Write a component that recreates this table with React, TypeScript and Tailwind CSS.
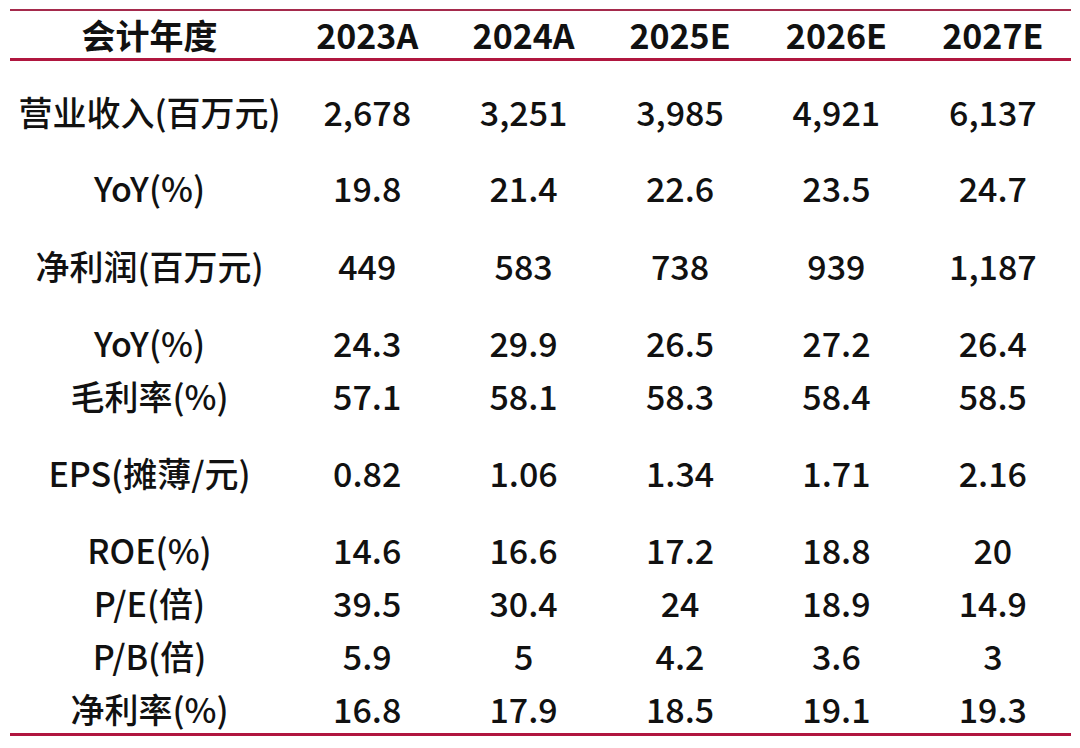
import React from "react";

const cols = ["2023A", "2024A", "2025E", "2026E", "2027E"];

const rows: { label: string; vals: string[]; h: string }[] = [
  { label: "营业收入(百万元)", vals: ["2,678", "3,251", "3,985", "4,921", "6,137"], h: "h-[102px]" },
  { label: "YoY(%)", vals: ["19.8", "21.4", "22.6", "23.5", "24.7"], h: "h-[50px]" },
  { label: "净利润(百万元)", vals: ["449", "583", "738", "939", "1,187"], h: "h-[106px]" },
  { label: "YoY(%)", vals: ["24.3", "29.9", "26.5", "27.2", "26.4"], h: "h-[48px]" },
  { label: "毛利率(%)", vals: ["57.1", "58.1", "58.3", "58.4", "58.5"], h: "h-[58px]" },
  { label: "EPS(摊薄/元)", vals: ["0.82", "1.06", "1.34", "1.71", "2.16"], h: "h-[96px]" },
  { label: "ROE(%)", vals: ["14.6", "16.6", "17.2", "18.8", "20"], h: "h-[58px]" },
  { label: "P/E(倍)", vals: ["39.5", "30.4", "24", "18.9", "14.9"], h: "h-[48px]" },
  { label: "P/B(倍)", vals: ["5.9", "5", "4.2", "3.6", "3"], h: "h-[58px]" },
  { label: "净利率(%)", vals: ["16.8", "17.9", "18.5", "19.1", "19.3"], h: "h-[48px]" },
];

export default function App() {
  return (
    <div
      className="w-[1080px] h-[748px] bg-white pt-[9px] px-[10px] text-[#111111]"
      style={{ fontFamily: '"Noto Sans CJK SC", "Noto Sans", sans-serif' }}
    >
      <div className="w-[1061px] border-t-2 border-[#a52a4c]">
        <div className="flex h-[50px] items-center border-b-[3px] border-[#b0163f] text-[34px] font-bold leading-none">
          <div className="w-[279px] text-center">会计年度</div>
          {cols.map((c) => (
            <div key={c} className="flex-1 text-center">
              {c}
            </div>
          ))}
        </div>
        <div className="border-b-[3px] border-[#b0163f]">
          {rows.map((r, i) => (
            <div key={i} className={`flex items-center ${r.h} text-[34px] font-medium leading-none`}>
              <div className="w-[279px] text-center">{r.label}</div>
              {r.vals.map((v, j) => (
                <div key={j} className="flex-1 text-center">
                  {v}
                </div>
              ))}
            </div>
          ))}
        </div>
      </div>
    </div>
  );
}
